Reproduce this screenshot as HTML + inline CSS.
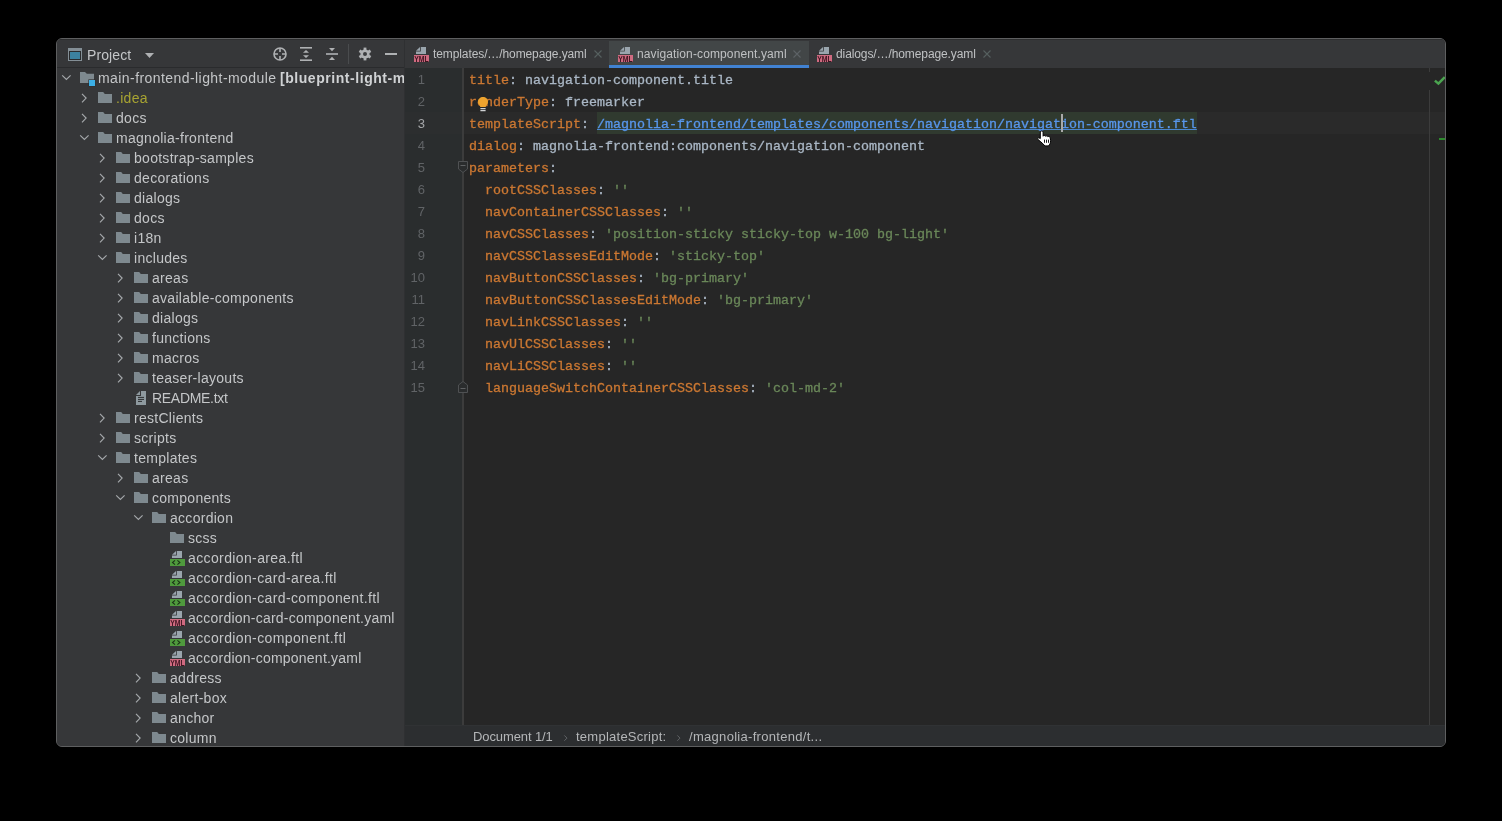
<!DOCTYPE html>
<html><head><meta charset="utf-8">
<style>
*{margin:0;padding:0;box-sizing:border-box}
html,body{width:1502px;height:821px;background:#000;overflow:hidden}
body{position:relative;font-family:"Liberation Sans",sans-serif}
.win{position:absolute;left:56px;top:38px;width:1390px;height:709px;border:1px solid #5e5f60;border-radius:6px;overflow:hidden;background:#363739}
.topline{position:absolute;left:0;top:0;width:1388px;height:1px;background:#2c2d2e;z-index:5}
.abs{position:absolute;line-height:0}
/* project panel */
.proj{position:absolute;left:0;top:0;width:347px;height:707px;background:#363739}
.projhead{position:absolute;left:0;top:0;width:347px;height:29px;background:#363739;border-bottom:1px solid #2a2b2d}
.ptitle{position:absolute;left:30px;top:6px;font-size:14px;line-height:20px;color:#c4c6c8;letter-spacing:0.1px}
.tree{position:absolute;left:0;top:29px;width:347px;height:678px;overflow:hidden}
.row{position:absolute;height:20px;line-height:20px;font-size:14px;letter-spacing:0.28px;color:#c4c6c8;white-space:nowrap}
.divider{position:absolute;left:347px;top:0;width:1px;height:707px;background:#2f3032}
/* editor */
.ed{position:absolute;left:348px;top:0;width:1040px;height:707px;background:#262626}
.tabs{position:absolute;left:0;top:0;width:1040px;height:29px;background:#363739}
.tab{position:absolute;top:2px;height:27px;font-size:12px;line-height:26px;color:#bfc1c3;white-space:nowrap}
.tab.sel{background:#424647}
.tab .ul{position:absolute;left:0;bottom:0;width:100%;height:3px;background:#4182d2}
.gutter{position:absolute;left:0;top:29px;width:57px;height:657px;background:#2a2d2e}
.code,.tree,.tabs,.bread,.projhead{will-change:transform}
.gline{position:absolute;left:57px;top:29px;width:2px;height:657px;background:#3c3c3c}
.code{position:absolute;left:0;top:29px;width:1040px;height:657px;font-family:"Liberation Mono",monospace;font-size:13.33px;overflow:hidden}
.curline{position:absolute;left:59px;top:73px;width:981px;height:22px;background:#2a2a2a}
.linkbg{position:absolute;left:192px;top:73px;width:600px;height:22px;background:#303a2f}
.curg{position:absolute;left:0;top:73px;width:57px;height:22px;background:#2c2e2f}
.ln{position:absolute;height:22px;line-height:22px;white-space:pre;color:#aab7c5;-webkit-text-stroke:0.3px}
.num{position:absolute;width:40px;text-align:right;height:22px;line-height:22px;color:#606366;font-family:"Liberation Sans",sans-serif;font-size:13px;letter-spacing:0px}
.k{color:#cc7832}
.s{color:#6a8759}
.lnk{color:#5896eb;text-decoration:underline;text-decoration-color:#4a86d0;text-underline-offset:1px;text-decoration-skip-ink:none}
.rmargin{position:absolute;left:1024px;width:1px;background:#3c3c3c}
.bread{position:absolute;left:0;top:686px;width:1040px;height:21px;background:#2c2e30;border-top:1px solid #303234}
.bc{position:absolute;top:0;font-size:13px;line-height:21px;color:#b4b6b8;white-space:nowrap}
.sep{position:absolute;top:0;font-size:11px;line-height:21px;color:#6a6c6e}
</style></head><body>
<div class="win">
  <div class="topline"></div>
  <div class="proj">
    <div class="projhead">
      <div class="abs" style="left:11px;top:9px"><svg width="14" height="13" viewBox="0 0 14 13"><rect x="0" y="0" width="14" height="13" fill="#848f96"/><rect x="1" y="3" width="12" height="9" fill="#2a2c2e"/><rect x="2" y="4" width="10" height="7" fill="#3c82a0"/></svg></div>
      <div class="ptitle">Project</div>
      <div class="abs" style="left:88px;top:14px"><svg width="10" height="6" viewBox="0 0 10 6"><path d="M0 0H9L4.5 5z" fill="#afb1b3"/></svg></div>
      <!-- locate -->
      <div class="abs" style="left:216px;top:8px"><svg width="14" height="14" viewBox="0 0 14 14"><circle cx="7" cy="7" r="6" fill="none" stroke="#afb1b3" stroke-width="1.6"/><path d="M7 1V5M7 9V13M1 7H5M9 7H13" stroke="#afb1b3" stroke-width="1.6"/></svg></div>
      <!-- expand all -->
      <div class="abs" style="left:243px;top:8px"><svg width="12" height="14" viewBox="0 0 12 14"><rect x="0" y="0" width="12" height="1.6" fill="#afb1b3"/><rect x="0" y="12.4" width="12" height="1.6" fill="#afb1b3"/><path d="M3 5.8L6 3L9 5.8zM3 8.2L6 11L9 8.2z" fill="#afb1b3"/></svg></div>
      <!-- collapse all -->
      <div class="abs" style="left:269px;top:9px"><svg width="12" height="12" viewBox="0 0 12 12"><path d="M3 0H9L6 3.2zM3 12H9L6 8.8z" fill="#afb1b3"/><rect x="0" y="5.2" width="12" height="1.6" fill="#afb1b3"/></svg></div>
      <div class="abs" style="left:291px;top:5px;width:1px;height:20px;background:#4a4c4e"></div>
      <!-- gear -->
      <div class="abs" style="left:301px;top:8px"><svg width="14" height="14" viewBox="0 0 14 14"><g fill="#afb1b3"><circle cx="7" cy="7" r="4.6"/><rect x="5.6" y="0.6" width="2.8" height="12.8"/><rect x="5.6" y="0.6" width="2.8" height="12.8" transform="rotate(60 7 7)"/><rect x="5.6" y="0.6" width="2.8" height="12.8" transform="rotate(120 7 7)"/></g><circle cx="7" cy="7" r="2" fill="#3b3d3f"/></svg></div>
      <!-- minimize -->
      <div class="abs" style="left:328px;top:14px;width:12px;height:2px;background:#afb1b3"></div>
    </div>
    <div class="tree">
<div class="abs" style="left:4px;top:4px"><svg width="10" height="10" viewBox="0 0 10 10"><path d="M1.2 3.4L5.4 7.5L9.6 3.4" fill="none" stroke="#a4a7aa" stroke-width="1.2"/></svg></div><div class="abs" style="left:22px;top:2px"><svg width="17" height="17" viewBox="0 0 17 17"><path d="M1 2h5l1.8 1.7H15V12.9H1z" fill="#7e898f"/><rect x="9.4" y="9.4" width="7" height="7" fill="#2b2d2f"/><rect x="10" y="10" width="6" height="6" fill="#3cafe6"/></svg></div><div class="row" style="left:41px;top:0px;"><span style="display:inline-block;width:182px;letter-spacing:0.43px">main-frontend-light-module</span><b style="color:#d0d2d4;letter-spacing:0.55px">[blueprint-light-module]</b></div>
<div class="abs" style="left:22px;top:25px"><svg width="10" height="10" viewBox="0 0 10 10"><path d="M3 0.9L7.1 5.1L3 9.3" fill="none" stroke="#a4a7aa" stroke-width="1.2"/></svg></div><div class="abs" style="left:41px;top:24px"><svg width="14" height="12" viewBox="0 0 14 12"><path d="M0 0h5.2l1.6 2H14V11H0z" fill="#7e898f"/></svg></div><div class="row" style="left:59px;top:20px;color:#a8a432;">.idea</div>
<div class="abs" style="left:22px;top:45px"><svg width="10" height="10" viewBox="0 0 10 10"><path d="M3 0.9L7.1 5.1L3 9.3" fill="none" stroke="#a4a7aa" stroke-width="1.2"/></svg></div><div class="abs" style="left:41px;top:44px"><svg width="14" height="12" viewBox="0 0 14 12"><path d="M0 0h5.2l1.6 2H14V11H0z" fill="#7e898f"/></svg></div><div class="row" style="left:59px;top:40px;">docs</div>
<div class="abs" style="left:22px;top:64px"><svg width="10" height="10" viewBox="0 0 10 10"><path d="M1.2 3.4L5.4 7.5L9.6 3.4" fill="none" stroke="#a4a7aa" stroke-width="1.2"/></svg></div><div class="abs" style="left:41px;top:64px"><svg width="14" height="12" viewBox="0 0 14 12"><path d="M0 0h5.2l1.6 2H14V11H0z" fill="#7e898f"/></svg></div><div class="row" style="left:59px;top:60px;">magnolia-frontend</div>
<div class="abs" style="left:40px;top:85px"><svg width="10" height="10" viewBox="0 0 10 10"><path d="M3 0.9L7.1 5.1L3 9.3" fill="none" stroke="#a4a7aa" stroke-width="1.2"/></svg></div><div class="abs" style="left:59px;top:84px"><svg width="14" height="12" viewBox="0 0 14 12"><path d="M0 0h5.2l1.6 2H14V11H0z" fill="#7e898f"/></svg></div><div class="row" style="left:77px;top:80px;">bootstrap-samples</div>
<div class="abs" style="left:40px;top:105px"><svg width="10" height="10" viewBox="0 0 10 10"><path d="M3 0.9L7.1 5.1L3 9.3" fill="none" stroke="#a4a7aa" stroke-width="1.2"/></svg></div><div class="abs" style="left:59px;top:104px"><svg width="14" height="12" viewBox="0 0 14 12"><path d="M0 0h5.2l1.6 2H14V11H0z" fill="#7e898f"/></svg></div><div class="row" style="left:77px;top:100px;">decorations</div>
<div class="abs" style="left:40px;top:125px"><svg width="10" height="10" viewBox="0 0 10 10"><path d="M3 0.9L7.1 5.1L3 9.3" fill="none" stroke="#a4a7aa" stroke-width="1.2"/></svg></div><div class="abs" style="left:59px;top:124px"><svg width="14" height="12" viewBox="0 0 14 12"><path d="M0 0h5.2l1.6 2H14V11H0z" fill="#7e898f"/></svg></div><div class="row" style="left:77px;top:120px;">dialogs</div>
<div class="abs" style="left:40px;top:145px"><svg width="10" height="10" viewBox="0 0 10 10"><path d="M3 0.9L7.1 5.1L3 9.3" fill="none" stroke="#a4a7aa" stroke-width="1.2"/></svg></div><div class="abs" style="left:59px;top:144px"><svg width="14" height="12" viewBox="0 0 14 12"><path d="M0 0h5.2l1.6 2H14V11H0z" fill="#7e898f"/></svg></div><div class="row" style="left:77px;top:140px;">docs</div>
<div class="abs" style="left:40px;top:165px"><svg width="10" height="10" viewBox="0 0 10 10"><path d="M3 0.9L7.1 5.1L3 9.3" fill="none" stroke="#a4a7aa" stroke-width="1.2"/></svg></div><div class="abs" style="left:59px;top:164px"><svg width="14" height="12" viewBox="0 0 14 12"><path d="M0 0h5.2l1.6 2H14V11H0z" fill="#7e898f"/></svg></div><div class="row" style="left:77px;top:160px;">i18n</div>
<div class="abs" style="left:40px;top:184px"><svg width="10" height="10" viewBox="0 0 10 10"><path d="M1.2 3.4L5.4 7.5L9.6 3.4" fill="none" stroke="#a4a7aa" stroke-width="1.2"/></svg></div><div class="abs" style="left:59px;top:184px"><svg width="14" height="12" viewBox="0 0 14 12"><path d="M0 0h5.2l1.6 2H14V11H0z" fill="#7e898f"/></svg></div><div class="row" style="left:77px;top:180px;">includes</div>
<div class="abs" style="left:58px;top:205px"><svg width="10" height="10" viewBox="0 0 10 10"><path d="M3 0.9L7.1 5.1L3 9.3" fill="none" stroke="#a4a7aa" stroke-width="1.2"/></svg></div><div class="abs" style="left:77px;top:204px"><svg width="14" height="12" viewBox="0 0 14 12"><path d="M0 0h5.2l1.6 2H14V11H0z" fill="#7e898f"/></svg></div><div class="row" style="left:95px;top:200px;">areas</div>
<div class="abs" style="left:58px;top:225px"><svg width="10" height="10" viewBox="0 0 10 10"><path d="M3 0.9L7.1 5.1L3 9.3" fill="none" stroke="#a4a7aa" stroke-width="1.2"/></svg></div><div class="abs" style="left:77px;top:224px"><svg width="14" height="12" viewBox="0 0 14 12"><path d="M0 0h5.2l1.6 2H14V11H0z" fill="#7e898f"/></svg></div><div class="row" style="left:95px;top:220px;">available-components</div>
<div class="abs" style="left:58px;top:245px"><svg width="10" height="10" viewBox="0 0 10 10"><path d="M3 0.9L7.1 5.1L3 9.3" fill="none" stroke="#a4a7aa" stroke-width="1.2"/></svg></div><div class="abs" style="left:77px;top:244px"><svg width="14" height="12" viewBox="0 0 14 12"><path d="M0 0h5.2l1.6 2H14V11H0z" fill="#7e898f"/></svg></div><div class="row" style="left:95px;top:240px;">dialogs</div>
<div class="abs" style="left:58px;top:265px"><svg width="10" height="10" viewBox="0 0 10 10"><path d="M3 0.9L7.1 5.1L3 9.3" fill="none" stroke="#a4a7aa" stroke-width="1.2"/></svg></div><div class="abs" style="left:77px;top:264px"><svg width="14" height="12" viewBox="0 0 14 12"><path d="M0 0h5.2l1.6 2H14V11H0z" fill="#7e898f"/></svg></div><div class="row" style="left:95px;top:260px;">functions</div>
<div class="abs" style="left:58px;top:285px"><svg width="10" height="10" viewBox="0 0 10 10"><path d="M3 0.9L7.1 5.1L3 9.3" fill="none" stroke="#a4a7aa" stroke-width="1.2"/></svg></div><div class="abs" style="left:77px;top:284px"><svg width="14" height="12" viewBox="0 0 14 12"><path d="M0 0h5.2l1.6 2H14V11H0z" fill="#7e898f"/></svg></div><div class="row" style="left:95px;top:280px;">macros</div>
<div class="abs" style="left:58px;top:305px"><svg width="10" height="10" viewBox="0 0 10 10"><path d="M3 0.9L7.1 5.1L3 9.3" fill="none" stroke="#a4a7aa" stroke-width="1.2"/></svg></div><div class="abs" style="left:77px;top:304px"><svg width="14" height="12" viewBox="0 0 14 12"><path d="M0 0h5.2l1.6 2H14V11H0z" fill="#7e898f"/></svg></div><div class="row" style="left:95px;top:300px;">teaser-layouts</div>
<div class="abs" style="left:78px;top:322px"><svg width="12" height="16" viewBox="0 0 12 16"><path d="M1 5L5 1V5z" fill="#8e999f"/><path d="M6 1H11V15H1V6H6z" fill="#8e999f"/><path d="M3 7.4H9M3 9.4H9M3 11.4H7" stroke="#2c2e30" stroke-width="1"/></svg></div><div class="row" style="left:95px;top:320px;letter-spacing:-0.3px;">README.txt</div>
<div class="abs" style="left:40px;top:345px"><svg width="10" height="10" viewBox="0 0 10 10"><path d="M3 0.9L7.1 5.1L3 9.3" fill="none" stroke="#a4a7aa" stroke-width="1.2"/></svg></div><div class="abs" style="left:59px;top:344px"><svg width="14" height="12" viewBox="0 0 14 12"><path d="M0 0h5.2l1.6 2H14V11H0z" fill="#7e898f"/></svg></div><div class="row" style="left:77px;top:340px;">restClients</div>
<div class="abs" style="left:40px;top:365px"><svg width="10" height="10" viewBox="0 0 10 10"><path d="M3 0.9L7.1 5.1L3 9.3" fill="none" stroke="#a4a7aa" stroke-width="1.2"/></svg></div><div class="abs" style="left:59px;top:364px"><svg width="14" height="12" viewBox="0 0 14 12"><path d="M0 0h5.2l1.6 2H14V11H0z" fill="#7e898f"/></svg></div><div class="row" style="left:77px;top:360px;">scripts</div>
<div class="abs" style="left:40px;top:384px"><svg width="10" height="10" viewBox="0 0 10 10"><path d="M1.2 3.4L5.4 7.5L9.6 3.4" fill="none" stroke="#a4a7aa" stroke-width="1.2"/></svg></div><div class="abs" style="left:59px;top:384px"><svg width="14" height="12" viewBox="0 0 14 12"><path d="M0 0h5.2l1.6 2H14V11H0z" fill="#7e898f"/></svg></div><div class="row" style="left:77px;top:380px;">templates</div>
<div class="abs" style="left:58px;top:405px"><svg width="10" height="10" viewBox="0 0 10 10"><path d="M3 0.9L7.1 5.1L3 9.3" fill="none" stroke="#a4a7aa" stroke-width="1.2"/></svg></div><div class="abs" style="left:77px;top:404px"><svg width="14" height="12" viewBox="0 0 14 12"><path d="M0 0h5.2l1.6 2H14V11H0z" fill="#7e898f"/></svg></div><div class="row" style="left:95px;top:400px;">areas</div>
<div class="abs" style="left:58px;top:424px"><svg width="10" height="10" viewBox="0 0 10 10"><path d="M1.2 3.4L5.4 7.5L9.6 3.4" fill="none" stroke="#a4a7aa" stroke-width="1.2"/></svg></div><div class="abs" style="left:77px;top:424px"><svg width="14" height="12" viewBox="0 0 14 12"><path d="M0 0h5.2l1.6 2H14V11H0z" fill="#7e898f"/></svg></div><div class="row" style="left:95px;top:420px;">components</div>
<div class="abs" style="left:76px;top:444px"><svg width="10" height="10" viewBox="0 0 10 10"><path d="M1.2 3.4L5.4 7.5L9.6 3.4" fill="none" stroke="#a4a7aa" stroke-width="1.2"/></svg></div><div class="abs" style="left:95px;top:444px"><svg width="14" height="12" viewBox="0 0 14 12"><path d="M0 0h5.2l1.6 2H14V11H0z" fill="#7e898f"/></svg></div><div class="row" style="left:113px;top:440px;">accordion</div>
<div class="abs" style="left:113px;top:464px"><svg width="14" height="12" viewBox="0 0 14 12"><path d="M0 0h5.2l1.6 2H14V11H0z" fill="#7e898f"/></svg></div><div class="row" style="left:131px;top:460px;">scss</div>
<div class="abs" style="left:112px;top:482px"><svg width="16" height="16" viewBox="0 0 16 16"><path d="M3 4.8L7 1V4.8z" fill="#9aa5ad"/><path d="M7.8 1H13V8H3V5.6H7.8z" fill="#9aa5ad"/><rect x="1" y="9" width="15" height="7" fill="#4f9a3d"/><path d="M6 10.3L3.5 12.5L6 14.7M8.4 10.3L10.9 12.5L8.4 14.7" fill="none" stroke="#1b3316" stroke-width="1.1"/></svg></div><div class="row" style="left:131px;top:480px;letter-spacing:0.38px;">accordion-area.ftl</div>
<div class="abs" style="left:112px;top:502px"><svg width="16" height="16" viewBox="0 0 16 16"><path d="M3 4.8L7 1V4.8z" fill="#9aa5ad"/><path d="M7.8 1H13V8H3V5.6H7.8z" fill="#9aa5ad"/><rect x="1" y="9" width="15" height="7" fill="#4f9a3d"/><path d="M6 10.3L3.5 12.5L6 14.7M8.4 10.3L10.9 12.5L8.4 14.7" fill="none" stroke="#1b3316" stroke-width="1.1"/></svg></div><div class="row" style="left:131px;top:500px;letter-spacing:0.38px;">accordion-card-area.ftl</div>
<div class="abs" style="left:112px;top:522px"><svg width="16" height="16" viewBox="0 0 16 16"><path d="M3 4.8L7 1V4.8z" fill="#9aa5ad"/><path d="M7.8 1H13V8H3V5.6H7.8z" fill="#9aa5ad"/><rect x="1" y="9" width="15" height="7" fill="#4f9a3d"/><path d="M6 10.3L3.5 12.5L6 14.7M8.4 10.3L10.9 12.5L8.4 14.7" fill="none" stroke="#1b3316" stroke-width="1.1"/></svg></div><div class="row" style="left:131px;top:520px;letter-spacing:0.38px;">accordion-card-component.ftl</div>
<div class="abs" style="left:112px;top:542px"><svg width="16" height="16" viewBox="0 0 16 16"><path d="M3 4.8L7 1V4.8z" fill="#9aa5ad"/><path d="M7.8 1H13V8H3V5.6H7.8z" fill="#9aa5ad"/><rect x="1" y="9" width="15" height="7" fill="#cf6a80"/><text x="8.5" y="15.9" font-family="Liberation Sans" font-size="8.4" font-weight="bold" text-anchor="middle" fill="#3d1520" textLength="14.4" lengthAdjust="spacingAndGlyphs">YML</text></svg></div><div class="row" style="left:131px;top:540px;letter-spacing:0.23px;">accordion-card-component.yaml</div>
<div class="abs" style="left:112px;top:562px"><svg width="16" height="16" viewBox="0 0 16 16"><path d="M3 4.8L7 1V4.8z" fill="#9aa5ad"/><path d="M7.8 1H13V8H3V5.6H7.8z" fill="#9aa5ad"/><rect x="1" y="9" width="15" height="7" fill="#4f9a3d"/><path d="M6 10.3L3.5 12.5L6 14.7M8.4 10.3L10.9 12.5L8.4 14.7" fill="none" stroke="#1b3316" stroke-width="1.1"/></svg></div><div class="row" style="left:131px;top:560px;letter-spacing:0.38px;">accordion-component.ftl</div>
<div class="abs" style="left:112px;top:582px"><svg width="16" height="16" viewBox="0 0 16 16"><path d="M3 4.8L7 1V4.8z" fill="#9aa5ad"/><path d="M7.8 1H13V8H3V5.6H7.8z" fill="#9aa5ad"/><rect x="1" y="9" width="15" height="7" fill="#cf6a80"/><text x="8.5" y="15.9" font-family="Liberation Sans" font-size="8.4" font-weight="bold" text-anchor="middle" fill="#3d1520" textLength="14.4" lengthAdjust="spacingAndGlyphs">YML</text></svg></div><div class="row" style="left:131px;top:580px;letter-spacing:0.23px;">accordion-component.yaml</div>
<div class="abs" style="left:76px;top:605px"><svg width="10" height="10" viewBox="0 0 10 10"><path d="M3 0.9L7.1 5.1L3 9.3" fill="none" stroke="#a4a7aa" stroke-width="1.2"/></svg></div><div class="abs" style="left:95px;top:604px"><svg width="14" height="12" viewBox="0 0 14 12"><path d="M0 0h5.2l1.6 2H14V11H0z" fill="#7e898f"/></svg></div><div class="row" style="left:113px;top:600px;">address</div>
<div class="abs" style="left:76px;top:625px"><svg width="10" height="10" viewBox="0 0 10 10"><path d="M3 0.9L7.1 5.1L3 9.3" fill="none" stroke="#a4a7aa" stroke-width="1.2"/></svg></div><div class="abs" style="left:95px;top:624px"><svg width="14" height="12" viewBox="0 0 14 12"><path d="M0 0h5.2l1.6 2H14V11H0z" fill="#7e898f"/></svg></div><div class="row" style="left:113px;top:620px;">alert-box</div>
<div class="abs" style="left:76px;top:645px"><svg width="10" height="10" viewBox="0 0 10 10"><path d="M3 0.9L7.1 5.1L3 9.3" fill="none" stroke="#a4a7aa" stroke-width="1.2"/></svg></div><div class="abs" style="left:95px;top:644px"><svg width="14" height="12" viewBox="0 0 14 12"><path d="M0 0h5.2l1.6 2H14V11H0z" fill="#7e898f"/></svg></div><div class="row" style="left:113px;top:640px;">anchor</div>
<div class="abs" style="left:76px;top:665px"><svg width="10" height="10" viewBox="0 0 10 10"><path d="M3 0.9L7.1 5.1L3 9.3" fill="none" stroke="#a4a7aa" stroke-width="1.2"/></svg></div><div class="abs" style="left:95px;top:664px"><svg width="14" height="12" viewBox="0 0 14 12"><path d="M0 0h5.2l1.6 2H14V11H0z" fill="#7e898f"/></svg></div><div class="row" style="left:113px;top:660px;">column</div>
    </div>
  </div>
  <div class="divider"></div>
  <div class="ed">
    <div class="tabs">
      <div class="tab" style="left:0;width:204px">
        <div class="abs" style="left:8px;top:5px"><svg width="16" height="16" viewBox="0 0 16 16"><path d="M3 4.8L7 1V4.8z" fill="#9aa5ad"/><path d="M7.8 1H13V8H3V5.6H7.8z" fill="#9aa5ad"/><rect x="1" y="9" width="15" height="7" fill="#cf6a80"/><text x="8.5" y="15.9" font-family="Liberation Sans" font-size="8.4" font-weight="bold" text-anchor="middle" fill="#3d1520" textLength="14.4" lengthAdjust="spacingAndGlyphs">YML</text></svg></div>
        <div class="abs" style="left:28px;top:0;line-height:26px;letter-spacing:-0.1px">templates/…/homepage.yaml</div>
        <div class="abs" style="left:189px;top:9px"><svg width="8" height="8" viewBox="0 0 8 8"><path d="M0.5 0.5L7.5 7.5M7.5 0.5L0.5 7.5" stroke="#56605f" stroke-width="1.1"/></svg></div>
      </div>
      <div class="tab sel" style="left:204px;width:200px">
        <div class="abs" style="left:8px;top:5px"><svg width="16" height="16" viewBox="0 0 16 16"><path d="M3 4.8L7 1V4.8z" fill="#9aa5ad"/><path d="M7.8 1H13V8H3V5.6H7.8z" fill="#9aa5ad"/><rect x="1" y="9" width="15" height="7" fill="#cf6a80"/><text x="8.5" y="15.9" font-family="Liberation Sans" font-size="8.4" font-weight="bold" text-anchor="middle" fill="#3d1520" textLength="14.4" lengthAdjust="spacingAndGlyphs">YML</text></svg></div>
        <div class="abs" style="left:28px;top:0;line-height:26px;letter-spacing:0.12px">navigation-component.yaml</div>
        <div class="abs" style="left:184px;top:9px"><svg width="8" height="8" viewBox="0 0 8 8"><path d="M0.5 0.5L7.5 7.5M7.5 0.5L0.5 7.5" stroke="#5d6266" stroke-width="1.1"/></svg></div>
        <div class="ul"></div>
      </div>
      <div class="tab" style="left:404px;width:190px">
        <div class="abs" style="left:7px;top:5px"><svg width="16" height="16" viewBox="0 0 16 16"><path d="M3 4.8L7 1V4.8z" fill="#9aa5ad"/><path d="M7.8 1H13V8H3V5.6H7.8z" fill="#9aa5ad"/><rect x="1" y="9" width="15" height="7" fill="#cf6a80"/><text x="8.5" y="15.9" font-family="Liberation Sans" font-size="8.4" font-weight="bold" text-anchor="middle" fill="#3d1520" textLength="14.4" lengthAdjust="spacingAndGlyphs">YML</text></svg></div>
        <div class="abs" style="left:27px;top:0;line-height:26px;letter-spacing:-0.1px">dialogs/…/homepage.yaml</div>
        <div class="abs" style="left:174px;top:9px"><svg width="8" height="8" viewBox="0 0 8 8"><path d="M0.5 0.5L7.5 7.5M7.5 0.5L0.5 7.5" stroke="#56605f" stroke-width="1.1"/></svg></div>
      </div>
    </div>
    <div class="gutter"></div>
    <div class="curg"></div>
    <div class="curline"></div>
    <div class="linkbg"></div>
    <div class="gline"></div>
    <div class="rmargin" style="top:29px;height:4px"></div>
    <div class="rmargin" style="top:51px;height:635px"></div>
    <div class="code">
<div class="ln" style="left:64px;top:1.5px"><span class="k">title</span>: navigation-component.title</div>
<div class="num" style="left:-20px;top:1.0px">1</div>
<div class="ln" style="left:64px;top:23.5px"><span class="k">renderType</span>: freemarker</div>
<div class="num" style="left:-20px;top:23.0px">2</div>
<div class="ln" style="left:64px;top:45.5px"><span class="k">templateScript</span>: <span class="lnk">/magnolia-frontend/templates/components/navigation/navigation-component.ftl</span></div>
<div class="num" style="left:-20px;top:45.0px;color:#a4a6a8">3</div>
<div class="ln" style="left:64px;top:67.5px"><span class="k">dialog</span>: magnolia-frontend:components/navigation-component</div>
<div class="num" style="left:-20px;top:67.0px">4</div>
<div class="ln" style="left:64px;top:89.5px"><span class="k">parameters</span>:</div>
<div class="num" style="left:-20px;top:89.0px">5</div>
<div class="ln" style="left:64px;top:111.5px">  <span class="k">rootCSSClasses</span>: <span class="s">''</span></div>
<div class="num" style="left:-20px;top:111.0px">6</div>
<div class="ln" style="left:64px;top:133.5px">  <span class="k">navContainerCSSClasses</span>: <span class="s">''</span></div>
<div class="num" style="left:-20px;top:133.0px">7</div>
<div class="ln" style="left:64px;top:155.5px">  <span class="k">navCSSClasses</span>: <span class="s">'position-sticky sticky-top w-100 bg-light'</span></div>
<div class="num" style="left:-20px;top:155.0px">8</div>
<div class="ln" style="left:64px;top:177.5px">  <span class="k">navCSSClassesEditMode</span>: <span class="s">'sticky-top'</span></div>
<div class="num" style="left:-20px;top:177.0px">9</div>
<div class="ln" style="left:64px;top:199.5px">  <span class="k">navButtonCSSClasses</span>: <span class="s">'bg-primary'</span></div>
<div class="num" style="left:-20px;top:199.0px">10</div>
<div class="ln" style="left:64px;top:221.5px">  <span class="k">navButtonCSSClassesEditMode</span>: <span class="s">'bg-primary'</span></div>
<div class="num" style="left:-20px;top:221.0px">11</div>
<div class="ln" style="left:64px;top:243.5px">  <span class="k">navLinkCSSClasses</span>: <span class="s">''</span></div>
<div class="num" style="left:-20px;top:243.0px">12</div>
<div class="ln" style="left:64px;top:265.5px">  <span class="k">navUlCSSClasses</span>: <span class="s">''</span></div>
<div class="num" style="left:-20px;top:265.0px">13</div>
<div class="ln" style="left:64px;top:287.5px">  <span class="k">navLiCSSClasses</span>: <span class="s">''</span></div>
<div class="num" style="left:-20px;top:287.0px">14</div>
<div class="ln" style="left:64px;top:309.5px">  <span class="k">languageSwitchContainerCSSClasses</span>: <span class="s">'col-md-2'</span></div>
<div class="num" style="left:-20px;top:309.0px">15</div>
    </div>
    <!-- fold markers -->
    <div class="abs" style="left:53px;top:122px"><svg width="10" height="12" viewBox="0 0 10 12"><path d="M0.5 0.5H9.5V8L5 11.5L0.5 8z" fill="#2a2c2d" stroke="#4f5153" stroke-width="1"/><path d="M2.5 4.5H7.5" stroke="#5f6163" stroke-width="1"/></svg></div>
    <div class="abs" style="left:53px;top:342px"><svg width="10" height="12" viewBox="0 0 10 12"><path d="M0.5 11.5H9.5V4L5 0.5L0.5 4z" fill="#2a2c2d" stroke="#4f5153" stroke-width="1"/><path d="M2.5 7.5H7.5" stroke="#5f6163" stroke-width="1"/></svg></div>
    <!-- bulb -->
    <div class="abs" style="left:72px;top:58px"><svg width="12" height="16" viewBox="0 0 12 16"><path d="M6 0C8.8 0 11 2.1 11 4.8C11 6.6 10.1 7.6 9.1 8.7L8.7 10H3.3L2.9 8.7C1.9 7.6 1 6.6 1 4.8C1 2.1 3.2 0 6 0z" fill="#eda32e"/><path d="M3.4 11.6H8.6M3.4 13.6H8.6" stroke="#d0d2d4" stroke-width="1.1"/></svg></div>
    <!-- caret -->
    <div class="abs" style="left:656px;top:75px;width:2px;height:18px;background:#a9a9a9"></div>
    <!-- hand cursor -->
    <div class="abs" style="left:631px;top:91px"><svg width="17" height="17" viewBox="0 0 17 17"><path d="M4.3 2C4.3 0.6 7.1 0.6 7.1 2V6.2C7.4 5.3 9.3 5.3 9.5 6.3C9.8 5.6 11.6 5.7 11.8 6.7C12.2 6.2 14 6.4 14.2 7.6L14.6 10.5C14.7 12.8 13.8 14.6 12.4 15.9H9C7.6 14.6 6.2 13 4.8 11.8L2 9.6C1.2 8.9 1.9 7.5 3.1 7.9L4.3 8.6z" fill="#fff" stroke="#000" stroke-width="1" stroke-linejoin="round"/><path d="M8.5 9.6V12.8M10.5 9.6V12.8M12.5 9.6V12.8" stroke="#000" stroke-width="0.9"/></svg></div>
    <!-- check -->
    <div class="abs" style="left:1028px;top:36px"><svg width="14" height="11" viewBox="0 0 14 11"><path d="M1.9 5.6L5.4 8.6L11.8 2.2" fill="none" stroke="#4ba550" stroke-width="2.5"/></svg></div>
    <div class="abs" style="left:1034px;top:99px;width:7px;height:2px;background:#2e8a2e"></div>
    <div class="bread">
      <div class="bc" style="left:68px;letter-spacing:-0.1px">Document 1/1</div>
      <div class="abs" style="left:158px;top:8px"><svg width="6" height="9" viewBox="0 0 6 9"><path d="M1.3 1.4L4 4.1L1.3 6.8" fill="none" stroke="#5f6265" stroke-width="1"/></svg></div>
      <div class="bc" style="left:171px;letter-spacing:0.25px">templateScript:</div>
      <div class="abs" style="left:271px;top:8px"><svg width="6" height="9" viewBox="0 0 6 9"><path d="M1.3 1.4L4 4.1L1.3 6.8" fill="none" stroke="#5f6265" stroke-width="1"/></svg></div>
      <div class="bc" style="left:284px;letter-spacing:0.3px">/magnolia-frontend/t...</div>
    </div>
  </div>
</div>
</body></html>
